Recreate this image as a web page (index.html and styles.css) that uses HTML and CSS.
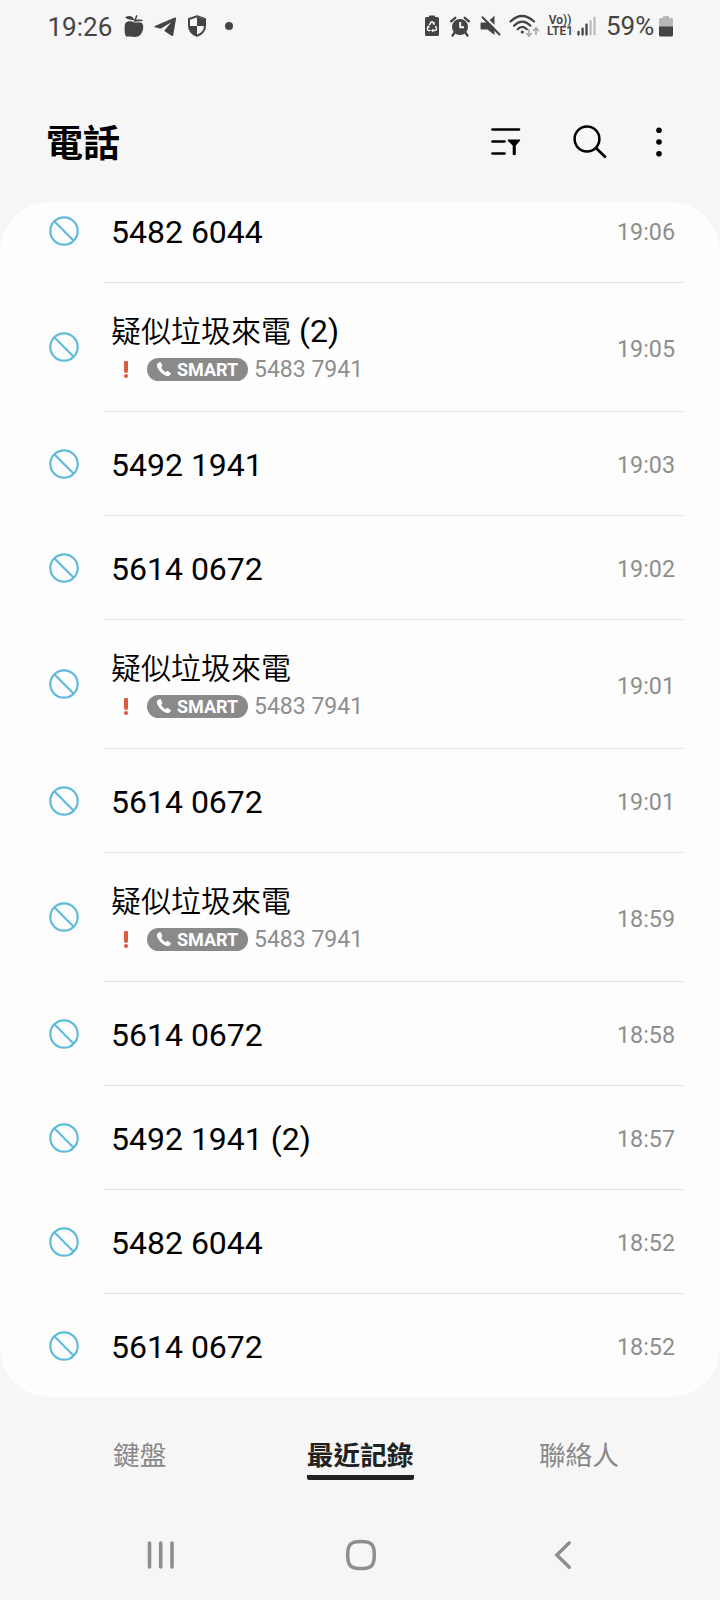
FILE: index.html
```html
<!DOCTYPE html>
<html lang="zh-Hant">
<head>
  <meta charset="UTF-8" />
  <meta name="viewport" content="width=device-width, initial-scale=1.0"/>
  <title>電話</title>
  <link rel="stylesheet" href="styles.css">
</head>
<body>
  <!-- Shared icons -->
  <svg class="sprite" aria-hidden="true">
    <symbol id="blocked" viewBox="0 0 30 30">
      <circle cx="15" cy="15" r="13.7" fill="none" stroke="#60badb" stroke-width="2.2"/>
      <path d="M5.3 5.3l19.4 19.4" stroke="#60badb" stroke-width="2.2"/>
    </symbol>
    <symbol id="handset" viewBox="0 0 16 16">
      <path d="M3.5 1.2L1.6 2.6C.3 3.8.8 6.6 3.8 10.2C7 13.8 10.6 15.7 12.7 14.9L14.7 13.3C15.1 12.9 15.1 12.3 14.7 11.9L12.2 10.2C11.7 9.9 11.1 9.9 10.7 10.3L9.7 11.2C8 10.5 6 8.5 5.2 6.8L6 5.7C6.4 5.3 6.4 4.7 6.1 4.2L4.9 1.6C4.6 1 4 .8 3.5 1.2Z" fill="#fff"/>
    </symbol>
  </svg>

  <div class="status-bar">
    <span class="clock">19:26</span>
    <svg class="apple" width="20" height="22" viewBox="0 0 20 22">
      <path d="M11 6.6C14 5.8 18 6.6 19 10C20 14.5 17.5 20 14 21.5C12 22 9 22 6 21.5H2C1 20 .4 17 .7 13C.4 9.5 1.5 6.5 5 6.3C7.5 6.2 9 7.3 11 6.6Z" fill="#444"/>
      <path d="M1 2.2C5-.2 9 .6 10.5 5.2C6.5 5 3.5 4.5 1 2.2Z" fill="#444"/>
      <path d="M10.5 8.5C10.5 5 12 2.2 13 .3M11.5 5L18.500 5.500" fill="none" stroke="#444" stroke-width="1.5"/>
      <path d="M9.5 7.2L18 7" stroke="#f6f6f6" stroke-width=".7"/>
    </svg>
    <svg class="plane" width="23" height="20" viewBox="0 0 23 20">
      <path d="M.8 9L20.8.5Q22.3.1 22.1 1.6L19.2 18.2Q18.8 19.5 17.5 18.8L10.8 14.2Q10.2 13.7 10.7 13L17.3 5.2L7.5 11.3Q6.8 11.7 6 11.5L.9 10.2Q0 9.6.8 9Z" fill="#444"/>
    </svg>
    <svg class="shield" width="20" height="22" viewBox="0 0 20 22">
      <path d="M10 1.2L18 4V10.500C18 15.500 14.500 19.300 10 20.800C5.500 19.300 2 15.500 2 10.500V4Z" fill="#f6f6f6" stroke="#444" stroke-width="2"/>
      <path d="M10 1.5L18 4V11H10Z" fill="#f6f6f6"/>
      <path d="M10 11V21C5 19 2 15.500 1.8 11Z" fill="#444"/>
      <path d="M10 1.500L18 4V11H10Z" fill="#444"/>
    </svg>
    <span class="dot"></span>

    <div class="status-right">
      <svg width="14" height="22" viewBox="0 0 14 22">
        <path d="M4 2V1Q4 .5 4.5.5H9.500Q10 .5 10 1V2H12.500Q14 2 14 3.500V19.500Q14 21 12.500 21H1.500Q0 21 0 19.500V3.500Q0 2 1.500 2Z" fill="#444"/>
        <path d="M4.3 10L6 7.3Q7 6 8 7.3L9 9M10.5 11L11.4 13Q11.8 15.5 9.5 15.5H8M5.5 15.5H4Q2 15.3 2.5 13L3.5 11.5" fill="none" stroke="#f6f6f6" stroke-width="1.5"/>
        <path d="M9.8 7L9.7 10L7.3 9ZM8.3 13.5V17.500L6 15.500ZM1.8 11.8L4 10.200L5 12.800Z" fill="#f6f6f6"/>
      </svg>
      <svg class="alarm" width="20" height="21" viewBox="0 0 20 21">
        <circle cx="10" cy="11" r="8" fill="#444"/>
        <path d="M1 5.3L5.2 1.8M19 5.3L14.8 1.8M4.7 16.5L2.5 19.5M15.3 16.500L17.500 19.500" stroke="#444" stroke-width="2.3" stroke-linecap="round"/>
        <path d="M10.2 6V11.3H14" fill="none" stroke="#f6f6f6" stroke-width="2"/>
      </svg>
      <svg class="mute" width="21" height="22" viewBox="0 0 21 22">
        <path d="M1.5 7.5H7L14.5.8V20L7.5 14.5H1.5Q.5 14.5.5 13.5V8.5Q.5 7.5 1.5 7.5Z" fill="#444"/>
        <path d="M3.7 1L21 17.5" stroke="#f6f6f6" stroke-width="2"/>
        <path d="M2.5 2.2L19.5 19.5" stroke="#444" stroke-width="2" stroke-linecap="round"/>
      </svg>
      <svg class="wifi" width="31" height="24" viewBox="0 0 31 24">
        <path d="M1.5 7.5Q13 -3.5 25 7.5M5 11.7Q13.2 3.5 21.5 11.7M8.7 15.2Q13.3 10.7 17.8 15.2" fill="none" stroke="#444" stroke-width="2.2" stroke-linecap="round"/>
        <circle cx="13.3" cy="18" r="1.6" fill="#444"/>
        <path d="M20 15V21.5M17.2 19L20 22L22.8 19M27 21V14.5M24.2 16.8L27 13.8L29.8 16.8" fill="none" stroke="#aaa" stroke-width="1.7"/>
      </svg>
      <div class="volte"><span>Vo))</span><span>LTE1</span></div>
      <svg class="signal" width="19" height="20" viewBox="0 0 19 20">
        <path d="M1.5 16V18.5M5.6 12.7V18.5M9.5 8.7V18.5" stroke="#444" stroke-width="2.3" stroke-linecap="round"/>
        <path d="M13.6 5V18.5M17.5 1.5V18.5" stroke="#b8b8b8" stroke-width="2.1" stroke-linecap="round"/>
      </svg>
      <span class="percent">59%</span>
      <svg class="battery" width="14" height="21" viewBox="0 0 14 21">
        <path d="M4 2V1Q4 0 5 0H9Q10 0 10 1V2H12.5Q14 2 14 3.5V11H0V3.5Q0 2 1.5 2Z" fill="#b8b8b8"/>
        <path d="M0 10.5H14V19Q14 20.5 12.5 20.5H1.5Q0 20.5 0 19Z" fill="#444"/>
      </svg>
    </div>
  </div>

  <header class="header">
    <h1>電話</h1>
    <svg width="30" height="30" viewBox="0 0 30 30" aria-label="篩選">
      <path d="M1.5 2.5H28M1.5 14.5H13.5M1.5 26.5H13.5" stroke="#000" stroke-width="2.7" stroke-linecap="round"/>
      <path d="M17.3 12.5H28.5Q29.5 12.8 28.8 14L24.8 18.5V27.5Q23.3 29 21.7 27.5V18.5L17 14Q16.5 13 17.3 12.5Z" fill="#000"/>
    </svg>
    <svg class="search" width="34" height="34" viewBox="0 0 34 34" aria-label="搜尋">
      <circle cx="14" cy="14" r="12.4" fill="none" stroke="#000" stroke-width="2.5"/>
      <path d="M23 23L32 31.8" stroke="#000" stroke-width="2.7" stroke-linecap="round"/>
    </svg>
    <svg class="more" width="6" height="30" viewBox="0 0 6 30" aria-label="更多">
      <circle cx="3" cy="3.3" r="2.8"/>
      <circle cx="3" cy="15" r="2.8"/>
      <circle cx="3" cy="26.7" r="2.8"/>
    </svg>
  </header>

  <main class="calls">
    <div class="call first">
      <svg class="blocked"><use href="#blocked"/></svg>
      <div class="info"><div class="name">5482 6044</div><time>19:06</time></div>
    </div>
    <div class="call spam">
      <svg class="blocked"><use href="#blocked"/></svg>
      <div class="info">
        <div>
          <div class="name"><span class="cjk">疑似垃圾來電</span> (2)</div>
          <div class="detail"><span class="alert"></span><span class="badge"><svg><use href="#handset"/></svg>SMART</span>5483 7941</div>
        </div>
        <time>19:05</time>
      </div>
    </div>
    <div class="call">
      <svg class="blocked"><use href="#blocked"/></svg>
      <div class="info"><div class="name">5492 1941</div><time>19:03</time></div>
    </div>
    <div class="call">
      <svg class="blocked"><use href="#blocked"/></svg>
      <div class="info"><div class="name">5614 0672</div><time>19:02</time></div>
    </div>
    <div class="call spam">
      <svg class="blocked"><use href="#blocked"/></svg>
      <div class="info">
        <div>
          <div class="name"><span class="cjk">疑似垃圾來電</span></div>
          <div class="detail"><span class="alert"></span><span class="badge"><svg><use href="#handset"/></svg>SMART</span>5483 7941</div>
        </div>
        <time>19:01</time>
      </div>
    </div>
    <div class="call">
      <svg class="blocked"><use href="#blocked"/></svg>
      <div class="info"><div class="name">5614 0672</div><time>19:01</time></div>
    </div>
    <div class="call spam">
      <svg class="blocked"><use href="#blocked"/></svg>
      <div class="info">
        <div>
          <div class="name"><span class="cjk">疑似垃圾來電</span></div>
          <div class="detail"><span class="alert"></span><span class="badge"><svg><use href="#handset"/></svg>SMART</span>5483 7941</div>
        </div>
        <time>18:59</time>
      </div>
    </div>
    <div class="call">
      <svg class="blocked"><use href="#blocked"/></svg>
      <div class="info"><div class="name">5614 0672</div><time>18:58</time></div>
    </div>
    <div class="call">
      <svg class="blocked"><use href="#blocked"/></svg>
      <div class="info"><div class="name">5492 1941 (2)</div><time>18:57</time></div>
    </div>
    <div class="call">
      <svg class="blocked"><use href="#blocked"/></svg>
      <div class="info"><div class="name">5482 6044</div><time>18:52</time></div>
    </div>
    <div class="call">
      <svg class="blocked"><use href="#blocked"/></svg>
      <div class="info"><div class="name">5614 0672</div><time>18:52</time></div>
    </div>
  </main>

  <nav class="tabs">
    <a>鍵盤</a>
    <a class="active">最近記錄</a>
    <a>聯絡人</a>
  </nav>

  <div class="nav-bar">
    <svg width="28" height="30" viewBox="0 0 28 30">
      <path d="M2.5 3V27M13.7 3V27M25 3V27" stroke="#8e8e8e" stroke-width="3.6" stroke-linecap="round"/>
    </svg>
    <svg class="home" width="32" height="32" viewBox="0 0 32 32">
      <path d="M16 2.5C26.5 2.5 29.3 5.5 29.3 16S26.5 29.5 16 29.5S2.7 26.5 2.7 16S5.5 2.5 16 2.5Z" fill="none" stroke="#8e8e8e" stroke-width="3.5"/>
    </svg>
    <svg class="back" width="18" height="30" viewBox="0 0 18 30">
      <path d="M15.3 2.7L2.8 15L15.3 27.3" fill="none" stroke="#8e8e8e" stroke-width="3.4" stroke-linecap="round"/>
    </svg>
  </div>
</body>
</html>
```
FILE: styles.css
```css
:root {
  --bg: #f6f6f6;
  --card-bg: #fdfdfd;
  --muted: #8e8e8e;
  --status: #444;
  --border: #e2e2e2;
}
* { box-sizing: border-box; }
body {
  font-family: Roboto, "Noto Sans CJK TC", sans-serif;
  background: var(--bg);
  color: #000;
  display: flex;
  flex-direction: column;
  width: 720px;
  height: 1600px;
  margin: 0;
  overflow: hidden;
}
svg { flex: none; display: block; }
.sprite {
  position: absolute;
  width: 0;
  height: 0;
}

.status-bar {
  display: flex;
  align-items: center;
  height: 52px;
  padding: 0 47px;
  font-size: 26px;
  color: var(--status);
}
.clock {
  width: 77px;
  padding: 2px 0 0 0.5px;
  line-height: 30px;
}
.plane { margin-left: 10px; margin-top: 2px; }
.shield { margin-left: 10px; }
.dot {
  width: 8px;
  height: 8px;
  margin-left: 18px;
  border-radius: 50%;
  background: var(--status);
}
.status-right {
  display: flex;
  align-items: center;
  margin-left: auto;
}
.alarm { margin-left: 11px; }
.mute { margin-left: 10px; }
.wifi { margin-left: 8px; }
.volte {
  display: flex;
  flex-direction: column;
  align-items: center;
  width: 28px;
  margin-left: 6px;
  font-size: 12px;
  font-weight: 600;
  line-height: 11px;
}
.signal { margin-left: 3px; }
.percent {
  width: 52px;
  margin-left: 10px;
  line-height: 30px;
  white-space: nowrap;
}
.battery { margin-left: 1px; }

.header {
  display: flex;
  align-items: center;
  height: 150px;
  padding: 30px 58px 0 46px;
}
.header h1 {
  flex: 1;
  margin: 0;
  padding-top: 6px;
  font-size: 37px;
  line-height: 44px;
  font-weight: 700;
}
.search { margin-left: 52px; }
.more { margin-left: 49px; }

.calls {
  flex: none;
  height: 1195px;
  background: var(--card-bg);
  border-radius: 50px;
  overflow: hidden;
}
.call {
  display: flex;
  align-items: center;
  height: 104px;
  padding-left: 49px;
}
.call.first { margin-top: -23px; }
.call.spam { height: 129px; }
.blocked {
  width: 30px;
  height: 30px;
}
.spam .blocked { margin-bottom: 2px; }
.info {
  display: flex;
  align-items: center;
  justify-content: space-between;
  width: 580px;
  height: 100%;
  margin-left: 24px;
  padding: 3px 8px 0 8px;
  border-bottom: 1px solid var(--border);
}
.call:last-child .info { border-bottom-color: transparent; }
.name {
  font-size: 32px;
  line-height: 38px;
}
.cjk {
  font-size: 30px;
  font-weight: 350;
}
time {
  font-size: 23.3px;
  color: var(--muted);
}
.detail {
  display: flex;
  align-items: center;
  height: 34px;
  padding-top: 2px;
  font-size: 23px;
  color: var(--muted);
}
.alert {
  display: flex;
  flex-direction: column;
  gap: 1.5px;
  width: 4px;
  margin: 0 19px 0 13px;
}
.alert::before,
.alert::after {
  content: "";
  height: 12px;
  background: #dc5a42;
  border-radius: 1px 1px 2px 2px;
}
.alert::after {
  height: 3.5px;
  border-radius: 2px;
}
.badge {
  display: flex;
  align-items: center;
  width: 101px;
  height: 23px;
  margin-right: 6px;
  padding-left: 9px;
  border-radius: 12px;
  background: #8a8a8a;
  color: #fff;
  font-size: 18px;
  font-weight: 700;
}
.badge svg {
  width: 16px;
  height: 16px;
  margin-right: 5px;
}

.tabs {
  display: flex;
  justify-content: space-between;
  height: 113px;
  padding: 39px 101px 0 113px;
  font-size: 26.7px;
  line-height: 40px;
  color: #888;
}
.tabs .active {
  height: 44px;
  margin-left: 15px;
  border-bottom: 5px solid #222;
  border-radius: 2px;
  color: #222;
  font-weight: 700;
}

.nav-bar {
  display: flex;
  align-items: center;
  height: 90px;
  padding-left: 147px;
}
.home { margin-left: 170px; }
.back { margin-left: 177px; }
```
